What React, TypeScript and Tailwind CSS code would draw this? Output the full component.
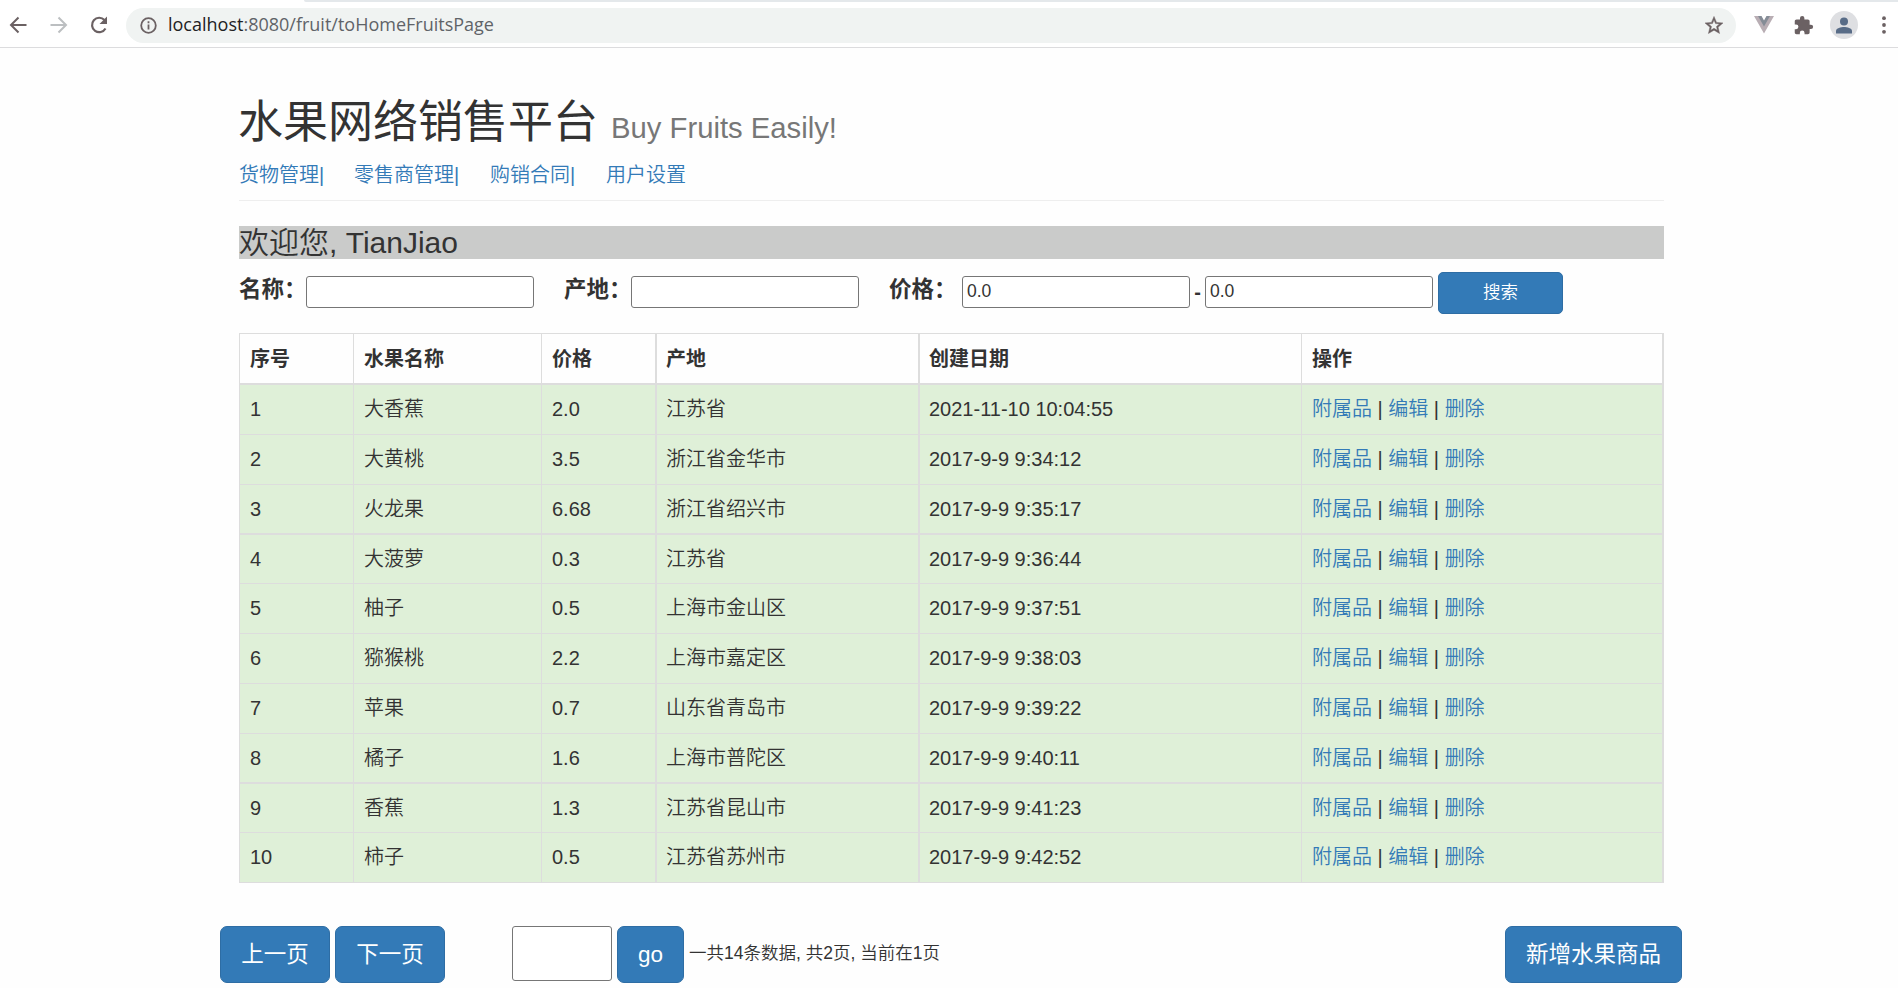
import React from "react";

type Fruit = { id: number; name: string; price: string; place: string; date: string };

const fruits: Fruit[] = [
  { id: 1, name: "大香蕉", price: "2.0", place: "江苏省", date: "2021-11-10 10:04:55" },
  { id: 2, name: "大黄桃", price: "3.5", place: "浙江省金华市", date: "2017-9-9 9:34:12" },
  { id: 3, name: "火龙果", price: "6.68", place: "浙江省绍兴市", date: "2017-9-9 9:35:17" },
  { id: 4, name: "大菠萝", price: "0.3", place: "江苏省", date: "2017-9-9 9:36:44" },
  { id: 5, name: "柚子", price: "0.5", place: "上海市金山区", date: "2017-9-9 9:37:51" },
  { id: 6, name: "猕猴桃", price: "2.2", place: "上海市嘉定区", date: "2017-9-9 9:38:03" },
  { id: 7, name: "苹果", price: "0.7", place: "山东省青岛市", date: "2017-9-9 9:39:22" },
  { id: 8, name: "橘子", price: "1.6", place: "上海市普陀区", date: "2017-9-9 9:40:11" },
  { id: 9, name: "香蕉", price: "1.3", place: "江苏省昆山市", date: "2017-9-9 9:41:23" },
  { id: 10, name: "柿子", price: "0.5", place: "江苏省苏州市", date: "2017-9-9 9:42:52" },
];

const rowHeights: Record<number, string> = { 4: "h-[49px]", 9: "h-[49px]" };
const rowBorders: Record<number, string> = { 3: "border-b-2", 8: "border-b-2" };

const columns = ["序号", "水果名称", "价格", "产地", "创建日期", "操作"];
const columnStyles = [
  "border-r pl-[10px]",
  "border-r pl-[10px]",
  "border-r-2 pl-[10px]",
  "border-r-2 pl-[9px]",
  "border-r pl-[9px]",
  "border-r-2 pl-[10px]",
];
const gridColumns = "grid grid-cols-[114px_188px_115px_263px_382px_362px]";

const button = "flex shrink-0 items-center justify-center border border-[#2e6da4] bg-[#337ab7] text-white";
const input = "shrink-0 rounded-[3px] border border-[#767676] bg-white";

function BrowserBar() {
  return (
    <header className="h-12 border-b border-[#dcdcde] bg-white">
      <div className="ml-[304px] h-0.5 rounded-bl-md bg-[#e4e8eb]" />
      <div className="flex h-[45px] items-center pt-px">
        <div className="flex w-[126px] shrink-0 items-center pl-[9px] text-[#6b6163]">
          <svg className="h-[18px] w-[18px]" viewBox="0 0 18 18" fill="none" stroke="currentColor" strokeWidth="2">
            <path d="M17.5 9H2.5M9.5 1.5 2 9l7.500 7.500" />
          </svg>
          <svg className="ml-[23px] h-[18px] w-[18px] text-[#bcbfc1]" viewBox="0 0 18 18" fill="none" stroke="currentColor" strokeWidth="2">
            <path d="M.5 9h15M8.500 1.500 16 9l-7.500 7.500" />
          </svg>
          <svg className="ml-[21px] h-[20px] w-[20px]" viewBox="0 0 20 20" fill="none" stroke="currentColor" strokeWidth="2.200">
            <path d="M16.500 13.500A7.200 7.200 0 1 1 15.500 5" />
            <path d="M18 1.500v7.500h-7.500z" fill="currentColor" stroke="none" />
          </svg>
        </div>
        <div className="flex h-[35px] w-[1610px] shrink-0 items-center rounded-full bg-[#f0f3f2] pr-[13px] pl-[14px]">
          <svg className="h-[17px] w-[17px] shrink-0 text-[#6b6163]" viewBox="0 0 17 17" fill="none" stroke="currentColor" strokeWidth="1.800">
            <circle cx="8.500" cy="8.500" r="7.300" />
            <path d="M8.500 7.500v5M8.500 4.300v2" />
          </svg>
          <span className="ml-[11px] w-[327px] pb-0.5 text-[18px] leading-6 whitespace-nowrap text-[#5f6368] [font-family:'Open_Sans','Noto_Sans',sans-serif]">
            <span className="text-[#202124]">localhost</span>:8080/fruit/toHomeFruitsPage
          </span>
          <svg className="ml-auto h-[18px] w-[18px] text-[#6b6163]" viewBox="0 0 24 24" fill="currentColor" stroke="currentColor" strokeWidth=".6">
            <path d="M24 9.240l-8.630-.740L12 .550 8.630 8.510 0 9.240l6.550 5.680L4.580 23.350 12 18.880l7.420 4.470-1.960-8.430L24 9.240zM12 16.400l-4.510 2.730 1.200-5.130-3.980-3.450 5.250-.450L12 5.260l2.050 4.850 5.250.450-3.980 3.450 1.200 5.130L12 16.400z" />
          </svg>
        </div>
        <svg className="ml-[18px] h-[18px] w-[20px] shrink-0" viewBox="0 0 20 18">
          <path d="M0 0h7l3 5.500L13 0h7L10 17.500z" fill="#b9aeb4" />
          <path d="M4 0h3.500L10 4.500 12.500 0H16L10 10.500z" fill="#858c96" />
        </svg>
        <svg className="ml-[19px] h-[21px] w-[21px] shrink-0 text-[#6b6163]" viewBox="0 0 24 24" fill="currentColor">
          <path d="M20.500 11H19V7c0-1.100-.900-2-2-2h-4V3.500a2.500 2.500 0 0 0-5 0V5H4c-1.100 0-1.990.900-1.990 2v3.800H3.500a2.700 2.700 0 0 1 0 5.400H2V20c0 1.100.900 2 2 2h3.800v-1.500a2.700 2.700 0 0 1 5.400 0V22H17c1.100 0 2-.900 2-2v-4h1.500a2.500 2.500 0 0 0 0-5z" />
        </svg>
        <div className="ml-4 flex h-7 w-7 shrink-0 items-center justify-center rounded-full bg-[#dedfe2]">
          <svg className="h-[17px] w-4" viewBox="0 0 16 17" fill="#586c87">
            <circle cx="8" cy="4.500" r="4" />
            <path d="M0 16.500V14c0-3 5-4 8-4s8 1 8 4v2.500z" />
          </svg>
        </div>
        <svg className="ml-[24px] h-[18px] w-1 shrink-0 text-[#6b6163]" viewBox="0 0 4 18" fill="currentColor">
          <circle cx="2" cy="2.200" r="1.900" />
          <circle cx="2" cy="9" r="1.900" />
          <circle cx="2" cy="15.800" r="1.900" />
        </svg>
      </div>
    </header>
  );
}

function SearchForm() {
  return (
    <form className="flex h-[42px] items-start text-[22.5px] font-bold">
      <label className="w-[67px] shrink-0 pt-px leading-[34px] whitespace-nowrap">名称：</label>
      <input className={`${input} mt-1 h-8 w-[228px]`} />
      <label className="ml-[30px] w-[67px] shrink-0 pt-px leading-[34px] whitespace-nowrap">产地：</label>
      <input className={`${input} mt-1 h-8 w-[228px]`} />
      <label className="ml-[30px] w-[73px] shrink-0 pt-px leading-[34px] whitespace-nowrap">价格：</label>
      <input className={`${input} mt-1 h-8 w-[228px] pb-0.5 pl-1 text-[17.5px] font-normal`} defaultValue="0.0" />
      <span className="w-[15px] shrink-0 pt-0.5 text-center text-[20px] leading-[36px]">-</span>
      <input className={`${input} mt-1 h-8 w-[228px] pb-0.5 pl-1 text-[17.5px] font-normal`} defaultValue="0.0" />
      <button type="button" className={`${button} ml-[5px] h-[42px] w-[125px] rounded-[5px] pb-0.5 text-[17.5px] font-[350]`}>
        搜索
      </button>
    </form>
  );
}

function FruitTable() {
  return (
    <div className="mt-[19px] w-[1425px] border-t border-l border-[#ddd] text-[20px]">
      <div className={`${gridColumns} h-[51px] border-b-2 border-[#ddd] font-bold`}>
        {columns.map((title, i) => (
          <div key={title} className={`${columnStyles[i]} flex items-center border-[#ddd]`}>
            {title}
          </div>
        ))}
      </div>
      {fruits.map((f) => (
        <div
          key={f.id}
          className={`${gridColumns} ${rowHeights[f.id] ?? "h-[50px]"} ${rowBorders[f.id] ?? "border-b"} border-[#ddd] bg-[#dff0d8] font-[350]`}
        >
          {[f.id, f.name, f.price, f.place, f.date].map((value, i) => (
            <div key={i} className={`${columnStyles[i]} flex items-center border-[#ddd] pb-px`}>
              {value}
            </div>
          ))}
          <div className="flex items-center border-r-2 border-[#ddd] pb-px pl-[10px]">
            <div className="whitespace-pre">
              <a className="text-[#337ab7]">附属品</a> | <a className="text-[#337ab7]">编辑</a> | <a className="text-[#337ab7]">删除</a>
            </div>
          </div>
        </div>
      ))}
    </div>
  );
}

function Pager() {
  return (
    <footer className="mt-[43px] ml-[220px] flex w-[1462px] items-start text-[22.5px]">
      <button className={`${button} h-[57px] w-[110px] rounded-[7px]`}>上一页</button>
      <button className={`${button} ml-[5px] h-[57px] w-[110px] rounded-[7px]`}>下一页</button>
      <input className={`${input} ml-[67px] h-[55px] w-[100px]`} />
      <button className={`${button} ml-[5px] h-[57px] w-[67px] rounded-[7px]`}>go</button>
      <span className="ml-[5px] pt-px text-[17.5px] leading-[53px] font-[350] whitespace-nowrap">
        一共14条数据, 共2页, 当前在1页
      </span>
      <button className={`${button} ml-auto h-[57px] w-[177px] rounded-[7px]`}>新增水果商品</button>
    </footer>
  );
}

export default function App() {
  return (
    <div className="h-[988px] w-[1898px] overflow-hidden bg-[#fefefe] text-[#333] [font-family:'Liberation_Sans','Noto_Sans_CJK_SC',sans-serif]">
      <BrowserBar />
      <main className="ml-[239px] w-[1425px]">
        <h1 className="flex h-[107px] items-baseline pt-[42px] text-[45px] leading-[66px] whitespace-nowrap">
          <span className="-ml-px">水果网络销售平台</span>
          <small className="ml-[13px] text-[29.25px] text-[#777]">Buy Fruits Easily!</small>
        </h1>
        <nav className="flex h-[46px] items-center border-b border-[#eee] pb-1.5 text-[20px] font-[350] text-[#337ab7]">
          <a className="w-[115px]">货物管理|</a>
          <a className="w-[136px]">零售商管理|</a>
          <a className="w-[116px]">购销合同|</a>
          <a>用户设置</a>
        </nav>
        <h2 className="mt-[25px] mb-[13px] h-[33px] bg-[#cacbca] text-[30px] leading-[33px] font-[350]">欢迎您, TianJiao</h2>
        <SearchForm />
        <FruitTable />
      </main>
      <Pager />
    </div>
  );
}
